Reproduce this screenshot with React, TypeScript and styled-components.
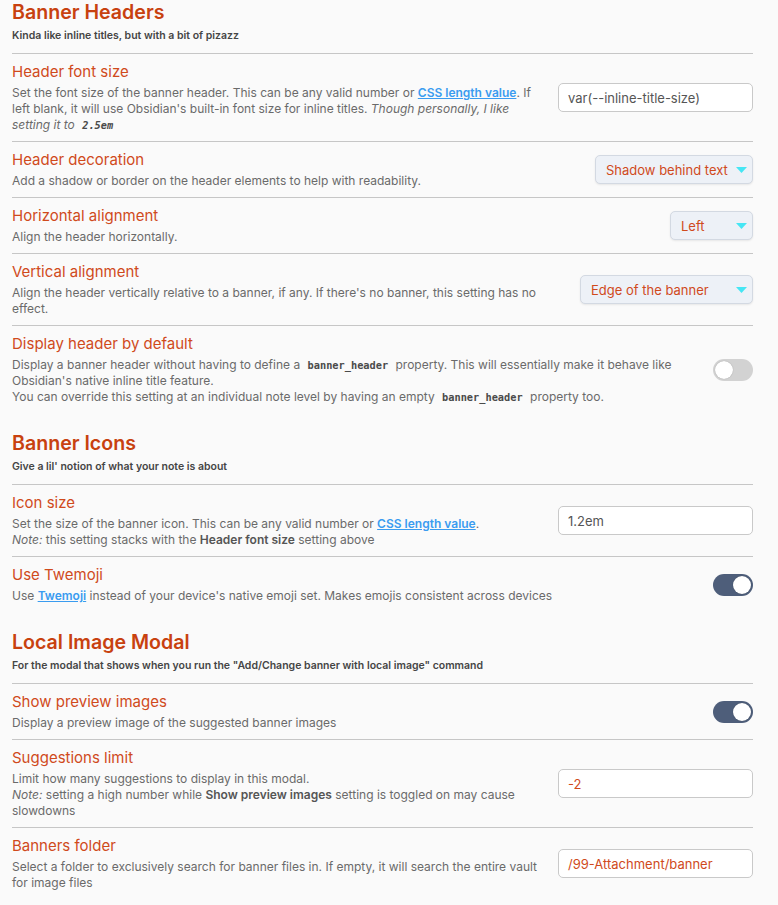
import { FC, ReactNode } from 'react'
import styled, { createGlobalStyle } from 'styled-components'

const GlobalStyle = createGlobalStyle`
  html, body {
    margin: 0;
    padding: 0;
    background: #fafafa;
  }
  body {
    font-family: Inter, 'Noto Sans', sans-serif;
    -webkit-font-smoothing: antialiased;
  }
`

type Control =
  | { kind: 'text'; value: string; accent?: boolean }
  | { kind: 'select'; value: string; width: number }
  | { kind: 'toggle'; on: boolean }

const Page = styled.div`
  padding: 0 25px 0 12px;
`

const Section = styled.section`
  & + & {
    margin-top: 18px;
  }
`

const SectionTitle = styled.h2`
  margin: 0;
  font-size: 19.6px;
  line-height: 24px;
  font-weight: 600;
  color: #c8410f;
`

const SectionSub = styled.div`
  margin-top: 5px;
  font-size: 10.5px;
  line-height: 14px;
  font-weight: 600;
  color: #454545;
  padding-bottom: 10px;
`

const Item = styled.div`
  display: flex;
  align-items: center;
  border-top: 1px solid #c6c6c6;
  padding: 8px 0 8px;
`

const Info = styled.div`
  flex: 1;
  min-width: 0;
  margin-right: 18px;
`

const Name = styled.div`
  font-size: 15px;
  line-height: 20px;
  color: #d04a1c;
`

const Desc = styled.div`
  margin-top: 3px;
  font-size: 12px;
  line-height: 16px;
  color: #6a6a6a;

  a {
    color: #3a9cf0;
    font-weight: 600;
    text-decoration: underline;
  }
  b {
    color: #555;
    font-weight: 600;
  }
  code {
    font-family: 'DejaVu Sans Mono', 'Liberation Mono', monospace;
    font-weight: 700;
    font-size: 10.3px;
    line-height: 14px;
    color: #4a4a4a;
    padding: 0 4px;
  }
`

const TextInput = styled.div<{ $accent?: boolean }>`
  box-sizing: border-box;
  width: 195px;
  height: 29px;
  flex-shrink: 0;
  display: flex;
  align-items: center;
  padding: 0 9px;
  background: #ffffff;
  border: 1px solid #c9c9c9;
  border-radius: 5px;
  font-size: 13px;
  color: ${p => (p.$accent ? '#d04a1c' : '#555')};
`

const Select = styled.div<{ $w: number }>`
  box-sizing: border-box;
  width: ${p => p.$w}px;
  height: 29px;
  flex-shrink: 0;
  display: flex;
  align-items: center;
  justify-content: space-between;
  padding: 0 5px 0 10px;
  background: #edf1f7;
  border: 1px solid #d3d9e2;
  border-radius: 5px;
  box-shadow: 0 1px 2px rgba(0, 0, 0, 0.08);
  font-size: 13px;
  color: #d04a1c;
`

const Toggle = styled.div<{ $on: boolean }>`
  position: relative;
  width: 40px;
  height: 22px;
  flex-shrink: 0;
  border-radius: 11px;
  background: ${p => (p.$on ? '#4e5e7a' : '#d2d2d2')};

  &::after {
    content: '';
    position: absolute;
    top: 2px;
    left: ${p => (p.$on ? '20px' : '2px')};
    width: 18px;
    height: 18px;
    border-radius: 50%;
    background: #fff;
    box-shadow: 0 0 1px rgba(0, 0, 0, 0.35);
  }
`

const Arrow = () => (
  <svg width="11" height="6" viewBox="0 0 11 6">
    <path d="M0 0 H11 L5.5 6 Z" fill="#45e6f4" />
  </svg>
)

const renderControl = (c: Control) => {
  if (c.kind === 'text') return <TextInput $accent={c.accent}>{c.value}</TextInput>
  if (c.kind === 'select')
    return (
      <Select $w={c.width}>
        <span>{c.value}</span>
        <Arrow />
      </Select>
    )
  return <Toggle $on={c.on} />
}

const Setting: FC<{ name: string; desc: ReactNode; control: Control }> = ({ name, desc, control }) => (
  <Item>
    <Info>
      <Name>{name}</Name>
      <Desc>{desc}</Desc>
    </Info>
    {renderControl(control)}
  </Item>
)

const App = () => {
  return (
    <Page>
      <GlobalStyle />
      <Section>
        <SectionTitle>Banner Headers</SectionTitle>
        <SectionSub>Kinda like inline titles, but with a bit of pizazz</SectionSub>
        <Setting
          name="Header font size"
          desc={
            <>
              Set the font size of the banner header. This can be any valid number or <a>CSS length value</a>. If
              left blank, it will use Obsidian's built-in font size for inline titles.{' '}
              <i>
                Though personally, I like setting it to <code>2.5em</code>
              </i>
            </>
          }
          control={{ kind: 'text', value: 'var(--inline-title-size)' }}
        />
        <Setting
          name="Header decoration"
          desc="Add a shadow or border on the header elements to help with readability."
          control={{ kind: 'select', value: 'Shadow behind text', width: 158 }}
        />
        <Setting
          name="Horizontal alignment"
          desc="Align the header horizontally."
          control={{ kind: 'select', value: 'Left', width: 83 }}
        />
        <Setting
          name="Vertical alignment"
          desc="Align the header vertically relative to a banner, if any. If there's no banner, this setting has no effect."
          control={{ kind: 'select', value: 'Edge of the banner', width: 173 }}
        />
        <Setting
          name="Display header by default"
          desc={
            <>
              Display a banner header without having to define a <code>banner_header</code> property. This will
              essentially make it behave like Obsidian's native inline title feature.
              <br />
              You can override this setting at an individual note level by having an empty{' '}
              <code>banner_header</code> property too.
            </>
          }
          control={{ kind: 'toggle', on: false }}
        />
      </Section>
      <Section>
        <SectionTitle>Banner Icons</SectionTitle>
        <SectionSub>Give a lil' notion of what your note is about</SectionSub>
        <Setting
          name="Icon size"
          desc={
            <>
              Set the size of the banner icon. This can be any valid number or <a>CSS length value</a>.
              <br />
              <i>Note:</i> this setting stacks with the <b>Header font size</b> setting above
            </>
          }
          control={{ kind: 'text', value: '1.2em' }}
        />
        <Setting
          name="Use Twemoji"
          desc={
            <>
              Use <a>Twemoji</a> instead of your device's native emoji set. Makes emojis consistent across devices
            </>
          }
          control={{ kind: 'toggle', on: true }}
        />
      </Section>
      <Section>
        <SectionTitle>Local Image Modal</SectionTitle>
        <SectionSub>For the modal that shows when you run the "Add/Change banner with local image" command</SectionSub>
        <Setting
          name="Show preview images"
          desc="Display a preview image of the suggested banner images"
          control={{ kind: 'toggle', on: true }}
        />
        <Setting
          name="Suggestions limit"
          desc={
            <>
              Limit how many suggestions to display in this modal.
              <br />
              <i>Note:</i> setting a high number while <b>Show preview images</b> setting is toggled on may cause
              slowdowns
            </>
          }
          control={{ kind: 'text', value: '-2', accent: true }}
        />
        <Setting
          name="Banners folder"
          desc="Select a folder to exclusively search for banner files in. If empty, it will search the entire vault for image files"
          control={{ kind: 'text', value: '/99-Attachment/banner', accent: true }}
        />
      </Section>
    </Page>
  )
}

export default App
